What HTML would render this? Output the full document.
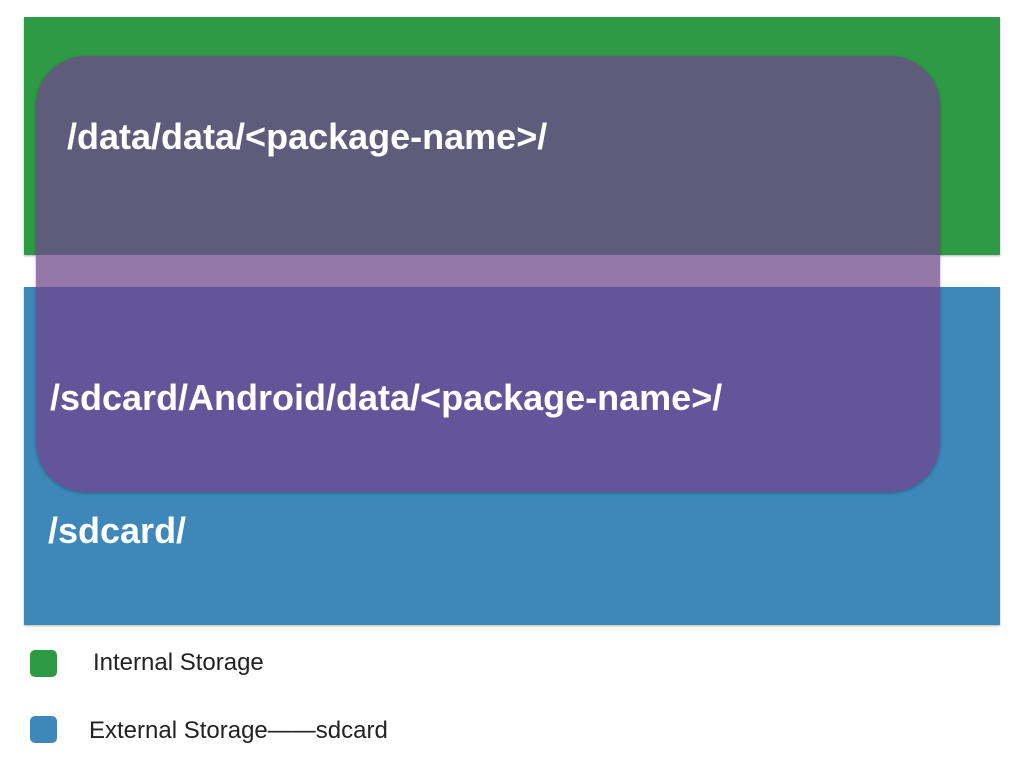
<!DOCTYPE html>
<html><head><style>
body{margin:0;width:1024px;height:768px;background:#fff;position:relative;overflow:hidden;font-family:"Liberation Sans",sans-serif}
div{position:absolute}
.t{color:#fff;font-weight:bold;font-size:36px;white-space:nowrap}
.l{color:#222;font-size:24px;white-space:nowrap}
</style></head><body>
<div style="left:24px;top:17px;width:976px;height:238px;background:#2f9a45;box-shadow:0 1px 2px rgba(0,0,0,.3)"></div>
<div style="left:24px;top:287px;width:976px;height:338px;background:#3d88b8;box-shadow:0 1px 2px rgba(0,0,0,.3)"></div>
<div style="left:36px;top:56px;width:904px;height:436px;border-radius:50px;overflow:hidden;box-shadow:0 1px 3px rgba(0,0,0,.3)">
 <div style="left:0;top:0;width:904px;height:199px;background:#5f5b7b"></div>
 <div style="left:0;top:199px;width:904px;height:32px;background:#9378a8"></div>
 <div style="left:0;top:231px;width:904px;height:205px;background:#64559a"></div>
</div>
<div class="t" style="left:67px;top:116px">/data/data/&lt;package-name&gt;/</div>
<div class="t" style="left:50px;top:377px">/sdcard/Android/data/&lt;package-name&gt;/</div>
<div class="t" style="left:48px;top:510px">/sdcard/</div>
<div style="left:30px;top:650px;width:27px;height:27px;border-radius:5px;background:#2f9a45"></div>
<div style="left:30px;top:716px;width:27px;height:27px;border-radius:5px;background:#3d88b8"></div>
<div class="l" style="left:93px;top:649px">Internal Storage</div>
<div class="l" style="left:89px;top:717px">External Storage——sdcard</div>
</body></html>
